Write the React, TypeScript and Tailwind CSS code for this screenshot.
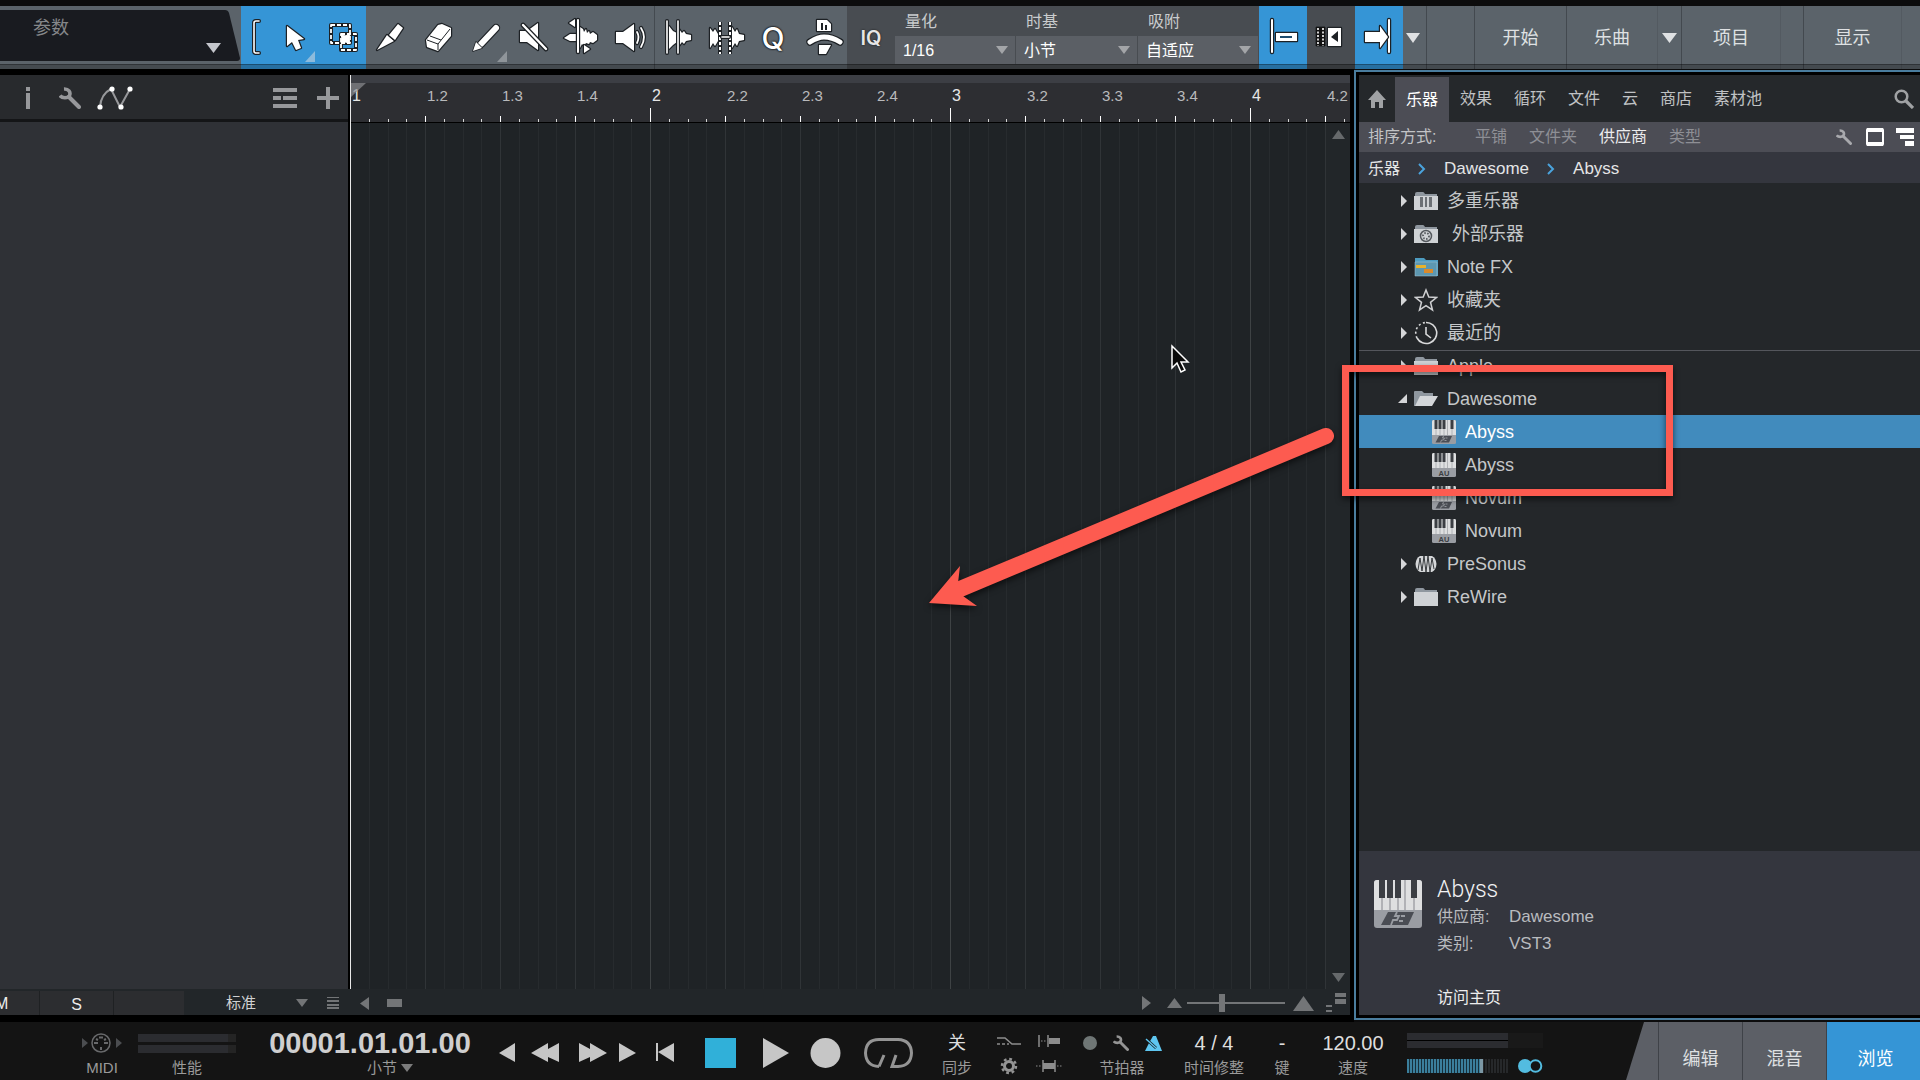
import React, { useState } from 'react';
import clsx from 'clsx';

const BEATS = Array.from({ length: 40 }, (_, i) => i);

/* ---------- small shared shapes ---------- */

type Dir = 'up' | 'down' | 'left' | 'right';

const TRI_POINTS: Record<Dir, string> = {
    up: '5,0 10,10 0,10',
    down: '0,0 10,0 5,10',
    left: '10,0 10,10 0,5',
    right: '0,0 10,5 0,10'
};

function Tri({ dir, className }: { dir: Dir; className: string }) {
    return (
        <svg viewBox="0 0 10 10" preserveAspectRatio="none" className={clsx('shrink-0', className)} fill="currentColor" aria-hidden="true">
            <polygon points={TRI_POINTS[dir]} />
        </svg>
    );
}

function Wrench({ className }: { className: string }) {
    return (
        <svg viewBox="0 0 22 22" className={clsx('shrink-0', className)} fill="none" stroke="currentColor" aria-hidden="true">
            <path d="M1 8.500C3 11.500 9 11.500 10.500 8.500C12 5 9.500 1.800 5 2" strokeWidth="3.600" />
            <path d="M10 10L20 20" strokeWidth="4" strokeLinecap="round" />
        </svg>
    );
}

/* ---------- toolbar ---------- */

interface ToolProps {
    label: string;
    className?: string;
    corner?: string;
    children: React.ReactNode;
}

// One 48x63 cell; white artwork gets a dark outline behind it
function Tool({ label, className, corner, children }: ToolProps) {
    return (
        <button aria-label={label} className={clsx('h-full w-12 shrink-0', className)}>
            <svg viewBox="0 0 48 63" className="h-[63px] w-12" aria-hidden="true">
                {corner && <polygon points="35,56 45,56 45,45" fill={corner} />}
                <g fill="#fff" stroke="#1d2125" strokeWidth="2.400" strokeLinejoin="round" style={{ paintOrder: 'stroke' }}>
                    {children}
                </g>
            </svg>
        </button>
    );
}

function Line({ d, w = 2 }: { d: string; w?: number }) {
    return (
        <>
            <path d={d} fill="none" stroke="#1d2125" strokeWidth={w + 2.4} strokeLinecap="round" />
            <path d={d} fill="none" stroke="#fff" strokeWidth={w} strokeLinecap="round" />
        </>
    );
}

interface FieldProps {
    id: string;
    label: string;
    value: string;
    className: string;
}

function Field({ id, label, value, className }: FieldProps) {
    return (
        <div className={clsx('relative flex h-full shrink-0 flex-col', className)}>
            <label htmlFor={id} className="h-[30px] pl-[10px] text-base leading-8 text-[#c9cbcd]">{label}</label>
            <select id={id} className="h-7 w-full appearance-none border-r border-[#484c51] bg-[#5b5f65] pl-2 pt-[2px] text-base text-white outline-none">
                <option>{value}</option>
            </select>
            <Tri dir="down" className="pointer-events-none absolute right-2 top-10 h-2 w-3 text-[#a3a5a8]" />
        </div>
    );
}

function MenuButton({ children, className }: { children?: React.ReactNode; className: string }) {
    return (
        <button className={clsx('flex h-full items-center justify-center border-r border-[#43494f] text-lg text-[#dfe1e3]', className)}>
            {children}
        </button>
    );
}

function Toolbar() {
    return (
        <header className="relative flex h-[63px] shrink-0 bg-[#5b636a]">
            {/* Parameter display */}
            <div className="relative h-full w-[241px] shrink-0">
                <svg viewBox="0 0 241 63" className="absolute inset-0" aria-hidden="true">
                    <path d="M0 4H225Q228 4 229 7L240 52Q240 55 237 55H0Z" fill="#191b20" />
                </svg>
                <button className="relative flex h-full w-full text-left text-lg text-[#85878a]">
                    <span className="pl-[33px] pt-2 leading-7">参数</span>
                    <Tri dir="down" className="ml-auto mr-5 mt-[37px] h-[10px] w-[15px] text-[#c4c6cc]" />
                </button>
            </div>

            {/* Arrow and range tools */}
            <div className="flex shrink-0 bg-[#3595d6]">
                <svg viewBox="0 0 29 63" className="h-[63px] w-[29px]" aria-hidden="true">
                    <Line d="M18 15h-3q-2 0-2 2v28q0 2 2 2h3" w={1.6} />
                </svg>
                <Tool label="箭头工具" corner="#8dbbdc">
                    <polygon points="17,20 17,40 22,36 26,44 31,42 28,34 34,33" />
                </Tool>
                <Tool label="范围工具">
                    <path d="M13 19h19v18H13zM23 28h15v16H23z" fill="none" strokeWidth="4" />
                    <path d="M13 19h19v18H13zM23 28h15v16H23z" fill="none" stroke="#fff" strokeWidth="1.800" strokeDasharray="4 2" />
                    <path d="M23 28l4 2 5-2-1 5 1 4-5-1-4 1 1-4z" stroke="#fff" strokeWidth="1" />
                </Tool>
            </div>

            <div className="flex shrink-0 border-r border-[#444a50]">
                <Tool label="分割工具">
                    <polygon points="11,44 21,29 28,35" />
                    <polygon points="23,29 32,18 37,22 29,34" />
                </Tool>
                <Tool label="擦除工具">
                    <polygon points="12,34 24,19 28,18 37,22 37,30 24,45 13,41" />
                    <path d="M13 34L24 38L36 23M24 38V44M16 30L27 34" fill="none" strokeWidth="1" />
                </Tool>
                <Tool label="绘图工具" corner="#8f959a">
                    <Line d="M34 22L19 38" w={6} />
                    <polygon points="11,45 14,36 20,42" strokeWidth="1.500" />
                </Tool>
                <Tool label="静音工具">
                    <polygon points="10,25 17,25 28,17 28,44 17,36 10,36" />
                    <Line d="M13 19L36 43" w={2.4} />
                </Tool>
                <Tool label="弯曲工具">
                    <path d="M6 32L12 28H18V35H12Z" />
                    <path d="M22 21L25 23L26 26L28 23L29 27L31 25L32 28L35 26L39 29V34L35 37L32 36L31 38L28 37L26 40L24 38L22 42Z" />
                    <Line d="M20 14V46" />
                    <polygon points="11,17 17,13 17,21" />
                    <polygon points="26,39 26,47 32,43" />
                </Tool>
                <Tool label="监听工具">
                    <polygon points="10,26 17,26 28,18 28,45 17,37 10,37" />
                    <Line d="M31 26Q34 31 31 37M35 22Q41 31 35 41" w={1.8} />
                </Tool>
            </div>

            <div className="flex shrink-0">
                <Tool label="瞬态检测">
                    <path d="M14 20L18 25L22 27L24 23L27 27L29 25L31 28L36 29V34L31 35L29 38L27 36L24 40L22 36L18 39L14 43Z" />
                    <Line d="M12 15V47M23 15V47" w={1.6} />
                </Tool>
                <Tool label="弯音标记">
                    <path d="M7 22L10 26L12 23L15 28V35L12 40L10 37L7 42Z" />
                    <path d="M29 21L32 26L34 23L36 28L41 29V34L36 35L34 40L32 37L29 42Z" />
                    <path d="M17 16V48M27 16V48" fill="none" strokeWidth="4" />
                    <path d="M17 16V48M27 16V48" fill="none" stroke="#fff" strokeWidth="2" strokeDasharray="3 2" />
                    <Line d="M19 31H26" w={1.6} />
                </Tool>
                <button aria-label="量化" className="h-full w-12 pr-1 font-[Inter] text-3xl font-medium text-white [text-shadow:0_0_2px_#000,0_0_2px_#000]">Q</button>
                <Tool label="宏">
                    <path d="M18 14H28L32 18V25H18Z" />
                    <path d="M22 17h2v7h-2zM26 19h2v5h-2z" fill="#1d2125" stroke="none" />
                    <Line d="M11 36Q19 31 25 31Q33 31 41 36" w={5} />
                    <polygon points="20,39 32,39 27,48 20,48" />
                </Tool>
            </div>

            {/* Quantize / timebase / snap */}
            <div className="flex shrink-0 bg-[#484c51]">
                <button className="h-full w-12 font-[Inter] text-xl font-semibold text-[#e6e6e6] [text-shadow:0_0_2px_#111]">IQ</button>
                <Field id="quantize" label="量化" value="1/16" className="w-[121px]" />
                <Field id="timebase" label="时基" value="小节" className="w-[122px]" />
                <Field id="snap" label="吸附" value="自适应" className="w-[121px]" />
                <Tool label="吸附开关" className="bg-[#3595d6]">
                    <Line d="M13 14V46" />
                    <rect x="17" y="27" width="21" height="8" />
                    <rect x="21" y="30" width="12" height="2" fill="#1d4c6e" stroke="none" />
                </Tool>
                <Tool label="波纹编辑">
                    <path d="M9 21h9v19H9z" strokeWidth="1" fill="#111" />
                    <path d="M11 22v18M16 22v18" stroke="#fff" strokeWidth="1.600" strokeDasharray="2 1.500" />
                    <path d="M21 22h13v18H21z" />
                    <polygon points="31,25 31,36 24,31" fill="#1d2125" stroke="none" />
                </Tool>
                <Tool label="自动滚动" className="bg-[#3595d6]">
                    <Line d="M34 14V46" />
                    <polygon points="10,26 25,26 25,20 33,31 25,42 25,36 10,36" />
                </Tool>
            </div>

            {/* Page menus */}
            <nav className="flex min-w-0 flex-1">
                <MenuButton className="w-6 pr-1"><Tri dir="down" className="h-[10px] w-[14px]" /></MenuButton>
                <MenuButton className="min-w-0 flex-1" />
                <MenuButton className="w-[92px]">开始</MenuButton>
                <MenuButton className="w-[91px] border-r-[#535a61]">乐曲</MenuButton>
                <MenuButton className="w-6"><Tri dir="down" className="h-[10px] w-[15px]" /></MenuButton>
                <MenuButton className="w-[99px] border-r-[#535a61]">项目</MenuButton>
                <MenuButton className="w-[23px]" />
                <MenuButton className="w-[98px] border-r-[#535a61]">显示</MenuButton>
                <MenuButton className="w-[18px] border-r-0" />
            </nav>

            <div className="pointer-events-none absolute inset-x-0 bottom-0 h-[5px] border-t border-black/30 bg-black/25" />
        </header>
    );
}

/* ---------- track column and arrangement ---------- */

function TrackColumn() {
    return (
        <section className="flex w-[350px] shrink-0 flex-col border-r-2 border-black">
            <div className="flex h-[47px] items-center border-b-[3px] border-[#141517] bg-[#282a2d] pl-6 pr-[9px] pt-px text-[#97989b]">
                <button aria-label="检查器">
                    <svg viewBox="0 0 8 22" className="h-[22px] w-2" fill="currentColor" aria-hidden="true">
                        <path d="M2 0h4v4H2zM2 6h4v16H2z" />
                    </svg>
                </button>
                <button aria-label="工具" className="ml-[27px]"><Wrench className="h-[22px] w-[22px]" /></button>
                <button aria-label="自动化" className="ml-4">
                    <svg viewBox="0 0 36 24" className="h-6 w-9" fill="none" stroke="currentColor" strokeWidth="2" aria-hidden="true">
                        <path d="M3 21Q4 8 14 3L23 21L33 3" />
                        <g fill="#fff" stroke="none">
                            <circle cx="3" cy="21" r="2.600" />
                            <circle cx="15" cy="3" r="2.600" />
                            <circle cx="24" cy="21" r="2.600" />
                            <circle cx="33" cy="3" r="2.600" />
                        </g>
                    </svg>
                </button>
                <button aria-label="轨道列表" className="ml-auto">
                    <svg viewBox="0 0 24 20" className="h-5 w-6" fill="currentColor" aria-hidden="true">
                        <path d="M0 0h24v4H0zM0 8h8v4H0zM10 8h14v4H10zM0 16h24v4H0z" />
                    </svg>
                </button>
                <button aria-label="添加轨道" className="ml-5">
                    <svg viewBox="0 0 22 22" className="h-[22px] w-[22px]" fill="currentColor" aria-hidden="true">
                        <path d="M9 0h4v9h9v4h-9v9H9v-9H0V9h9z" />
                    </svg>
                </button>
            </div>
            <div className="flex-1 bg-[#2f3136]" />
        </section>
    );
}

function Arrangement() {
    return (
        <section className="relative flex min-w-0 flex-1 flex-col">
            {/* Ruler */}
            <div className="flex h-12 shrink-0 overflow-hidden border-b border-t-8 border-b-black border-t-[#3c3e44] bg-[#2d2e32]">
                {BEATS.map((b) => {
                    const bar = Math.floor(b / 4) + 1;
                    const isBar = b % 4 === 0;
                    return (
                        <div key={b} className={clsx('w-[75px] shrink-0 flex-col', b > 13 ? 'hidden min-[2000px]:flex' : 'flex')}>
                            <span className={clsx('h-[25px] pl-[2px] leading-[26px]', isBar ? 'text-base text-[#e6e6e6]' : 'text-[15px] text-[#b9babc]')}>
                                {isBar ? bar : `${bar}.${(b % 4) + 1}`}
                            </span>
                            <div className="grid flex-1 grid-cols-4 items-end">
                                <i className={clsx('border-l border-white', isBar ? 'h-[14px]' : 'h-[6px]')} />
                                <i className="h-[3px] border-l border-[#d5d5d5]" />
                                <i className="h-[3px] border-l border-[#d5d5d5]" />
                                <i className="h-[3px] border-l border-[#d5d5d5]" />
                            </div>
                        </div>
                    );
                })}
            </div>

            <div className="flex min-h-0 flex-1 bg-[#222629]">
                <div className="flex min-w-0 flex-1 overflow-hidden bg-[#1f2326]">
                    {BEATS.map((b) => (
                        <div key={b} className="grid w-[75px] shrink-0 grid-cols-4">
                            <i className={clsx('border-l', b % 4 === 0 ? 'border-[#3e4244]' : 'border-[#303437]')} />
                            <i className="border-l border-[#272b2e]" />
                            <i className="border-l border-[#272b2e]" />
                            <i className="border-l border-[#272b2e]" />
                        </div>
                    ))}
                </div>
                <div className="flex w-6 shrink-0 flex-col items-center justify-between pb-[7px] pt-[7px] text-[#66696b]">
                    <Tri dir="up" className="h-[9px] w-[13px]" />
                    <Tri dir="down" className="h-[9px] w-[13px]" />
                </div>
            </div>

            {/* Playhead */}
            <div className="absolute inset-y-0 left-0 w-px bg-[#e8e8e8]" />
            <svg viewBox="0 0 15 15" className="absolute left-px top-2 h-[15px] w-[15px]" fill="#8b8d90" fillOpacity="0.700" aria-hidden="true">
                <polygon points="0,0 15,0 0,14" />
            </svg>
        </section>
    );
}

function TrackFooter() {
    return (
        <div className="flex h-[26px] shrink-0 items-center bg-[#222629] pt-[2px] text-[#737577]">
            <button className="flex h-full w-10 items-center overflow-hidden border-r border-[#1f2123] bg-[#2c2d30] pt-[2px] text-base text-[#ececec]">
                <span className="-ml-[5px]">M</span>
            </button>
            <button className="h-full w-[74px] border-r border-[#1f2123] bg-[#2c2d30] pt-[2px] text-base text-[#ececec]">S</button>
            <div className="h-full w-[70px] bg-[#2c2d30]" />
            <select aria-label="轨道高度" className="ml-[42px] w-[70px] appearance-none bg-transparent text-[15px] text-[#d0d1d2] outline-none">
                <option>标准</option>
            </select>
            <Tri dir="down" className="h-2 w-3" />
            <svg viewBox="0 0 12 12" className="ml-[19px] h-3 w-3" fill="currentColor" aria-hidden="true">
                <path d="M0 0h12v1H0zM0 3h12v2H0zM0 7h12v2H0zM0 10h12v2H0z" />
            </svg>
            <Tri dir="left" className="ml-[21px] h-[13px] w-[9px]" />
            <div className="ml-[18px] h-2 w-[15px] bg-[#737577]" />
            <Tri dir="right" className="ml-auto h-[14px] w-[9px]" />
            <Tri dir="up" className="ml-4 h-[10px] w-[15px]" />
            <input
                type="range"
                aria-label="水平缩放"
                defaultValue={35}
                className="ml-[5px] h-[18px] w-[98px] appearance-none bg-[linear-gradient(#737577,#737577)] bg-[length:100%_2px] bg-center bg-no-repeat [&::-webkit-slider-thumb]:h-[18px] [&::-webkit-slider-thumb]:w-[6px] [&::-webkit-slider-thumb]:appearance-none [&::-webkit-slider-thumb]:bg-[#737577]"
            />
            <Tri dir="up" className="ml-2 h-[15px] w-[21px]" />
            <svg viewBox="0 0 20 20" className="ml-3 mr-1 h-5 w-5" fill="currentColor" aria-hidden="true">
                <path d="M9 0h11v4H9zM9 6h11v5H9zM0 12h6v2H0zM0 17h6v2H0z" />
            </svg>
        </div>
    );
}

/* ---------- browser ---------- */

type IconKind = 'multi' | 'external' | 'notefx' | 'star' | 'recent' | 'folder' | 'open' | 'vst3' | 'au' | 'presonus';

function PianoIcon({ kind, className }: { kind: 'vst3' | 'au'; className: string }) {
    return (
        <svg viewBox="0 0 48 48" className={clsx('shrink-0', className)} aria-hidden="true">
            <rect width="48" height="48" rx="3" fill="#9a9da3" />
            <path d="M0 30V3Q0 0 3 0H45Q48 0 48 3V30Z" fill="#dedfe0" />
            <path d="M8 16v14M16 16v14M24 16v14M31 0v30M40 16v14" stroke="#a2a4a8" strokeWidth="1.500" />
            <path d="M5 0h6v18H5zM13 0h6v18h-6zM21 0h6v18h-6zM37 0h6v18h-6z" fill="#3b3e43" />
            {kind === 'vst3' ? (
                <>
                    <path d="M14 32H40L34 45H7Z" fill="#4a4d54" />
                    <path d="M23 32L21 36H25L23 40H19L17 45" fill="none" stroke="#9a9da3" strokeWidth="1.800" />
                    <path d="M27 36H31M25 41H29" stroke="#9a9da3" strokeWidth="1.800" />
                </>
            ) : (
                <text x="24" y="45" textAnchor="middle" fontSize="15" fontWeight="600" fill="#3a3d42">AU</text>
            )}
        </svg>
    );
}

function NodeIcon({ kind }: { kind: IconKind }) {
    if (kind === 'vst3' || kind === 'au') return <PianoIcon kind={kind} className="h-6 w-6" />;
    return (
        <svg viewBox="0 0 24 24" className="h-6 w-6 shrink-0" aria-hidden="true">
            {(kind === 'multi' || kind === 'external' || kind === 'folder') && (
                <>
                    <path d="M1 5Q1 3 3 3H9Q10 3 11 5H23V20H1Z" fill="#8f979f" />
                    <path d="M0 7H24V21H0Z" fill="#cfd2d5" />
                </>
            )}
            {kind === 'multi' && <path d="M6 8h3v10H6zM11 8h2v10h-2zM15 8h3v10h-3z" fill="#6c7075" />}
            {kind === 'external' && (
                <g fill="none" stroke="#55595e">
                    <circle cx="12" cy="14" r="5.500" strokeWidth="1.500" />
                    <circle cx="12" cy="14" r="3" strokeWidth="1.800" strokeDasharray="1.500 1.500" />
                </g>
            )}
            {kind === 'notefx' && (
                <>
                    <path d="M1 3H10L12 5H24V21H1Z" fill="#4d9bc0" />
                    <path d="M1 7H23V21H1Z" fill="#5d97b0" stroke="#a6c8d8" strokeWidth="0.500" />
                    <path d="M2 10h10v3H2z" fill="#e8b32c" />
                    <path d="M10 14h9v4h-9z" fill="#d98a2c" />
                </>
            )}
            {kind === 'star' && (
                <polygon points="12,2 14.800,9 22.500,9.500 16.500,14.300 18.500,22 12,17.700 5.500,22 7.500,14.300 1.500,9.500 9.200,9" fill="none" stroke="#cfd0d2" strokeWidth="1.500" />
            )}
            {kind === 'recent' && (
                <g fill="none" stroke="#d8d9da" strokeWidth="1.600">
                    <path d="M12 1.500A10.500 10.500 0 1 1 3 17" />
                    <path d="M3 17A10.500 10.500 0 0 1 12 1.500" strokeDasharray="2 2.500" />
                    <path d="M12 6V13L17 17" />
                </g>
            )}
            {kind === 'open' && (
                <>
                    <path d="M0 5Q0 4 1 4H8L10 6H19V12L3 19H0Z" fill="#8f979f" />
                    <path d="M6 9H24L18 19H1Z" fill="#d3d6d9" />
                </>
            )}
            {kind === 'presonus' && (
                <>
                    <path d="M6 4H18Q22 6 22.500 12Q22 18 18 20H6Q2 18 1.500 12Q2 6 6 4Z" fill="#d4d6d8" />
                    <path d="M4 18L6 6L8 19L10 4L12 20L14 4L16 20L18 6L20 17" fill="none" stroke="#25282b" strokeWidth="0.900" />
                </>
            )}
        </svg>
    );
}

interface TreeNode {
    name: string;
    icon: IconKind;
    open?: boolean;
    child?: boolean;
    indent?: boolean;
}

const pinned: TreeNode[] = [
    { name: '多重乐器', icon: 'multi' },
    { name: '外部乐器', icon: 'external', indent: true },
    { name: 'Note FX', icon: 'notefx' },
    { name: '收藏夹', icon: 'star' },
    { name: '最近的', icon: 'recent' }
];

const vendors: TreeNode[] = [
    { name: 'Apple', icon: 'folder' },
    { name: 'Dawesome', icon: 'open', open: true },
    { name: 'Abyss', icon: 'vst3', child: true },
    { name: 'Abyss', icon: 'au', child: true },
    { name: 'Novum', icon: 'vst3', child: true },
    { name: 'Novum', icon: 'au', child: true },
    { name: 'PreSonus', icon: 'presonus' },
    { name: 'ReWire', icon: 'folder' }
];

function TreeRow({ node, selected, onSelect }: { node: TreeNode; selected?: boolean; onSelect?: () => void }) {
    return (
        <li>
            <button
                onClick={onSelect}
                className={clsx('flex h-[33px] w-full items-center text-left text-lg', node.child ? 'pl-[73px]' : 'pl-[42px]', selected ? 'bg-[#418bbd] text-white' : 'text-[#c5c7c9]')}
            >
                {!node.child && (
                    node.open
                        ? <svg viewBox="0 0 9 9" className="-ml-[3px] mr-[7px] h-[9px] w-[9px]" fill="#d5d6d8" aria-hidden="true"><polygon points="9,0 9,9 0,9" /></svg>
                        : <Tri dir="right" className="mr-[7px] h-3 w-[6px] text-[#d5d6d8]" />
                )}
                <NodeIcon kind={node.icon} />
                <span className={node.indent ? 'pl-[14px]' : 'pl-[9px]'}>{node.name}</span>
            </button>
        </li>
    );
}

function Browser() {
    const [tab, setTab] = useState('乐器');
    const [sort, setSort] = useState('供应商');
    const [selected, setSelected] = useState(2);

    return (
        <aside className="mb-[2px] mt-px flex w-[566px] shrink-0 flex-col border-2 border-r-0 border-[#4a7d9e] bg-black pb-[3px] pl-[3px] pt-[3px]">
            <div className="flex h-[47px] shrink-0 items-center bg-[#25282b] text-base text-[#c0c2c4]">
                <button aria-label="主页" className="flex h-full w-9 items-center justify-center">
                    <svg viewBox="0 0 18 18" className="h-[18px] w-[18px]" fill="#a0a2a4" aria-hidden="true">
                        <path d="M9 0L18 10H15V18H11V12H7V18H3V10H0Z" />
                    </svg>
                </button>
                {['乐器', '效果', '循环', '文件', '云', '商店', '素材池'].map((t) => (
                    <button
                        key={t}
                        onClick={() => setTab(t)}
                        className={clsx('h-full px-[11px]', tab === t && 'border-t-2 border-[#25282b] bg-[#4c4d55] text-white')}
                    >
                        {t}
                    </button>
                ))}
                <button aria-label="搜索" className="ml-auto mr-[6px]">
                    <svg viewBox="0 0 20 20" className="h-5 w-5" fill="none" stroke="#a0a2a4" aria-hidden="true">
                        <circle cx="7.500" cy="7.500" r="5.800" strokeWidth="2.500" />
                        <path d="M12 12L19 19" strokeWidth="3.200" />
                    </svg>
                </button>
            </div>

            <div className="flex h-[30px] shrink-0 items-center bg-[#4c4d55] pl-[9px] pr-[6px] text-base">
                <span className="mr-[37px] w-[70px] whitespace-nowrap text-[#c2c3c6]">排序方式:</span>
                <div className="flex gap-[22px]">
                    {['平铺', '文件夹', '供应商', '类型'].map((s) => (
                        <button key={s} onClick={() => setSort(s)} className={sort === s ? 'text-[#ececee]' : 'text-[#8e8f95]'}>{s}</button>
                    ))}
                </div>
                <button aria-label="选项" className="ml-auto text-[#a8a9ad]"><Wrench className="h-4 w-4" /></button>
                <button aria-label="预览面板" className="ml-[14px]">
                    <svg viewBox="0 0 18 18" className="h-[18px] w-[18px]" fill="none" aria-hidden="true">
                        <rect x="1" y="1" width="16" height="16" rx="1" stroke="#fff" strokeWidth="2" />
                        <path d="M1 2h16M1 16h16" stroke="#fff" strokeWidth="4" />
                    </svg>
                </button>
                <button aria-label="树状视图" className="ml-3">
                    <svg viewBox="0 0 18 18" className="h-[18px] w-[18px]" fill="#fff" aria-hidden="true">
                        <path d="M0 0h18v5H0zM4 7h14v4H4zM9 13h9v5H9z" />
                    </svg>
                </button>
            </div>

            <nav className="flex h-[31px] shrink-0 items-center bg-[#34363e] pl-[9px] pt-[2px] text-[17px] text-[#e4e5e6]">
                {['乐器', 'Dawesome', 'Abyss'].map((c, i) => (
                    <React.Fragment key={c}>
                        {i > 0 && (
                            <svg viewBox="0 0 8 12" className="mx-[18px] h-3 w-2" fill="none" stroke="#4aa3dd" strokeWidth="2" aria-hidden="true">
                                <path d="M1 1L6 6L1 11" />
                            </svg>
                        )}
                        <a href="#browser" className={i === 0 ? 'text-base' : undefined}>{c}</a>
                    </React.Fragment>
                ))}
            </nav>

            <div className="min-h-0 flex-1 bg-[#24272a] pt-px">
                <ul className="border-b border-[#54565c] pb-px">
                    {pinned.map((n) => <TreeRow key={n.name} node={n} />)}
                </ul>
                <ul className="-mt-[2px]">
                    {vendors.map((n, i) => (
                        <TreeRow key={`${n.name}-${i}`} node={n} selected={selected === i} onSelect={() => setSelected(i)} />
                    ))}
                </ul>
            </div>

            {/* Selected item details */}
            <div className="flex h-[164px] shrink-0 bg-[#34363e] pl-[15px] pt-[29px] text-base text-[#b9bbbf]">
                <PianoIcon kind="vst3" className="h-12 w-12" />
                <div className="ml-[15px]">
                    <h2 className="-mt-1 font-[Roboto] text-[23px] font-light leading-[27px] text-[#f2f2f3]">Abyss</h2>
                    <dl className="grid grid-cols-[72px_auto] leading-[27px]">
                        <dt>供应商:</dt>
                        <dd className="text-[17px]">Dawesome</dd>
                        <dt>类别:</dt>
                        <dd className="text-[17px]">VST3</dd>
                    </dl>
                    <a href="#home" className="mt-[27px] block leading-[27px] text-[#ededee]">访问主页</a>
                </div>
            </div>
        </aside>
    );
}

/* ---------- transport ---------- */

function Stack({ label, className, children }: { label: React.ReactNode; className: string; children: React.ReactNode }) {
    return (
        <div className={clsx('flex shrink-0 flex-col items-center pt-2', className)}>
            <div className="flex h-[26px] items-center">{children}</div>
            <div className="flex h-6 items-center whitespace-nowrap text-[15px] text-[#9a9a9a]">{label}</div>
        </div>
    );
}

function TransportButton({ label, w, className, children }: { label: string; w: number; className?: string; children: React.ReactNode }) {
    return (
        <button aria-label={label} className={clsx('shrink-0', className)}>
            <svg viewBox={`0 0 ${w} 30`} width={w} height={30} fill="#c6c6c6" aria-hidden="true">{children}</svg>
        </button>
    );
}

function Transport() {
    return (
        <footer className="flex h-[58px] shrink-0 bg-[#141414]">
            <Stack label="MIDI" className="ml-[68px] w-[68px]">
                <Tri dir="right" className="mr-[3px] h-[10px] w-[6px] text-[#4b4d50]" />
                <svg viewBox="0 0 20 20" className="h-5 w-5" fill="none" stroke="#68696b" aria-hidden="true">
                    <circle cx="10" cy="10" r="9" strokeWidth="1.500" />
                    <path d="M3 10h4M13 10h4M5 6l2 1M15 6l-2 1M8 4.500h4M10 14v3" strokeWidth="2" />
                </svg>
                <Tri dir="right" className="ml-[5px] h-[10px] w-[6px] text-[#4b4d50]" />
            </Stack>
            <Stack label="性能" className="ml-[2px] w-[98px]">
                <div className="flex w-[98px] flex-col gap-[3px]">
                    <div className="h-2 border-r-8 border-[#242424] bg-[#2b2c30]" />
                    <div className="h-2 border-r-8 border-[#242424] bg-[#2b2c30]" />
                </div>
            </Stack>
            <Stack
                className="ml-8 w-[204px]"
                label={<button className="flex items-center pl-10">小节<Tri dir="down" className="ml-1 h-2 w-3 text-[#7c7c7c]" /></button>}
            >
                <span className="text-[29px] font-bold leading-none text-[#cfcfcf]">00001.01.01.00</span>
            </Stack>

            <div className="ml-[27px] flex items-center pb-[2px] pt-[6px]">
                <TransportButton label="后退一格" w={16}><polygon points="16,5 16,24 0,15" /></TransportButton>
                <TransportButton label="快退" w={28} className="ml-4"><polygon points="17,5 17,11 28,5 28,24 17,19 17,24 0,15" /></TransportButton>
                <TransportButton label="快进" w={28} className="ml-5"><polygon points="0,5 11,11 11,5 28,15 11,24 11,19 0,24" /></TransportButton>
                <TransportButton label="前进一格" w={17} className="ml-3"><polygon points="0,5 17,15 0,24" /></TransportButton>
                <TransportButton label="回到起点" w={18} className="ml-5"><path d="M0 5h2v18H0zM18 5V24L2 14Z" /></TransportButton>
                <TransportButton label="停止" w={31} className="ml-[31px]"><rect width="31" height="30" fill="#30b0d9" /></TransportButton>
                <TransportButton label="播放" w={26} className="ml-[27px]"><polygon points="0,0 26,15 0,30" /></TransportButton>
                <TransportButton label="录音" w={31} className="ml-[21px]"><circle cx="15.500" cy="15" r="15" /></TransportButton>
                <TransportButton label="循环" w={49} className="ml-[23px]">
                    <path d="M15 28.500Q2 28 1.500 15Q2 1.500 15 1.500H34Q47 2 47.500 15Q47 28 34 28.500H28L32 17M15 28.500L20 17" fill="none" stroke="#949494" strokeWidth="3" />
                </TransportButton>
            </div>

            <Stack label="同步" className="ml-[26px] w-9"><span className="text-lg text-[#dedede]">关</span></Stack>
            <Stack
                className="ml-[18px] w-8"
                label={
                    <svg viewBox="0 0 18 18" className="mb-1 h-[18px] w-[18px]" fill="none" stroke="#949494" aria-hidden="true">
                        <circle cx="9" cy="9" r="4.500" strokeWidth="3" />
                        <circle cx="9" cy="9" r="7" strokeWidth="2.500" strokeDasharray="2.750 2.750" />
                    </svg>
                }
            >
                <svg viewBox="0 0 24 12" className="mb-1 h-3 w-6" fill="none" stroke="#8c8c8c" strokeWidth="1.600" aria-hidden="true">
                    <path d="M0 3H8L15 9H24" />
                    <path d="M0 9H12" strokeDasharray="3 2" />
                </svg>
            </Stack>
            <Stack
                className="ml-[10px] w-7"
                label={
                    <svg viewBox="0 0 26 12" className="mb-1 h-3 w-[26px]" stroke="#8c8c8c" fill="#8c8c8c" aria-hidden="true">
                        <path d="M0 6H5M21 6H26" strokeDasharray="1.500 1.500" />
                        <path d="M7 0V12M19 0V12" strokeWidth="1.500" />
                        <path d="M7 3h12v6H7z" stroke="none" />
                    </svg>
                }
            >
                <svg viewBox="0 0 22 12" className="mb-1 h-3 w-[22px]" stroke="#8c8c8c" fill="#8c8c8c" aria-hidden="true">
                    <path d="M1 0V12M10 0V12" strokeWidth="1.500" />
                    <path d="M3 6H9" strokeDasharray="1.500 1.500" />
                    <path d="M11 3h11v6H11z" stroke="none" />
                </svg>
            </Stack>
            <Stack label="节拍器" className="ml-5 w-[78px]">
                <button aria-label="预备拍" className="h-[14px] w-[14px] rounded-full bg-[#6f7675]" />
                <button aria-label="节拍器设置" className="ml-4 text-[#949494]"><Wrench className="h-4 w-4" /></button>
                <button aria-label="节拍器开关" className="ml-4">
                    <svg viewBox="0 0 17 15" className="h-[15px] w-[17px]" aria-hidden="true">
                        <path d="M8 0H11L17 15H0L4 7Z" fill="#5ec6f0" />
                        <path d="M1 3L11 12" stroke="#141414" strokeWidth="2.600" />
                        <path d="M1 3L11 12" stroke="#5ec6f0" strokeWidth="1.400" />
                    </svg>
                </button>
            </Stack>
            <Stack label="时间修整" className="ml-[22px] w-[62px]"><span className="text-xl text-[#dedede]">4 / 4</span></Stack>
            <Stack label="键" className="ml-5 w-[34px]"><span className="text-xl text-[#dedede]">-</span></Stack>
            <Stack label="速度" className="ml-5 w-[68px]"><span className="text-xl text-[#dedede]">120.00</span></Stack>

            {/* Output meters */}
            <div className="ml-5 flex w-[136px] shrink-0 flex-col pt-[11px]">
                <div className="flex flex-col gap-px border-r-[35px] border-[#191919] bg-black">
                    <div className="h-[7px] bg-[#2b2c30]" />
                    <div className="h-[7px] bg-[#2b2c30]" />
                </div>
                <div className="mt-[11px] flex items-center">
                    <div className="flex h-[14px] w-[101px] bg-[repeating-linear-gradient(90deg,#26282a_0_2px,#141414_2px_3px)]">
                        <div className="h-full w-3/4 border-r-[3px] border-[#7c98a5] bg-[repeating-linear-gradient(90deg,#3b7f9c_0_2px,#17303b_2px_3px)]" />
                    </div>
                    <svg viewBox="0 0 25 14" className="ml-[10px] h-[14px] w-[25px]" aria-hidden="true">
                        <circle cx="7" cy="7" r="7" fill="#53bce0" />
                        <circle cx="17.500" cy="7" r="5.800" fill="#141414" stroke="#53bce0" strokeWidth="2" />
                    </svg>
                </div>
            </div>

            {/* View switches */}
            <div className="ml-auto flex shrink-0 text-lg text-[#dfe0e2]">
                <svg viewBox="0 0 32 58" className="h-[58px] w-8" aria-hidden="true"><polygon points="18,0 32,0 32,58 0,58" fill="#5c5f66" /></svg>
                <button className="w-[84px] border-l border-[#3f4248] bg-[#5c5f66] pt-4">编辑</button>
                <button className="w-[84px] border-l border-[#3f4248] bg-[#5c5f66] pt-4">混音</button>
                <button className="w-[94px] border-l border-[#3f4248] bg-[#3595d6] pl-1 pt-4 text-white">浏览</button>
            </div>
        </footer>
    );
}

export default function App() {
    return (
        <div lang="zh-CN" className="flex h-screen flex-col overflow-hidden bg-[#0c0c0d] pt-[6px] font-['Liberation_Sans','Noto_Sans_CJK_SC',sans-serif]">
            <Toolbar />

            <main className="relative flex min-h-0 flex-1">
                <div className="flex min-w-0 flex-1 flex-col border-b-[7px] border-r-4 border-t-[6px] border-black">
                    <div className="flex min-h-0 flex-1">
                        <TrackColumn />
                        <Arrangement />
                    </div>
                    <TrackFooter />
                </div>
                <Browser />

                {/* Drag hint drawn over the workspace */}
                <div className="pointer-events-none absolute right-[247px] top-[296px] h-[131px] w-[331px] border-[7px] border-[#fd5b50] drop-shadow-[0_3px_3px_rgba(0,0,0,0.6)]" />
                <svg viewBox="0 0 410 190" className="pointer-events-none absolute right-[581px] top-[357px] h-[190px] w-[410px] drop-shadow-[0_3px_3px_rgba(0,0,0,0.6)]" aria-hidden="true">
                    <path d="M24 166L397 10" stroke="#fd5b50" strokeWidth="16" strokeLinecap="round" />
                    <polygon points="0,177 31,140 29,157 34,170 48,180" fill="#fd5b50" />
                </svg>
                <svg viewBox="0 0 20 30" className="pointer-events-none absolute right-[729px] top-[275px] h-[30px] w-5" aria-hidden="true">
                    <polygon points="1,2 1,24 6,19 10,28 14,26 10,18 17,18" fill="#0a0a0a" stroke="#fff" strokeWidth="1.500" />
                </svg>
            </main>

            <Transport />
        </div>
    );
}
